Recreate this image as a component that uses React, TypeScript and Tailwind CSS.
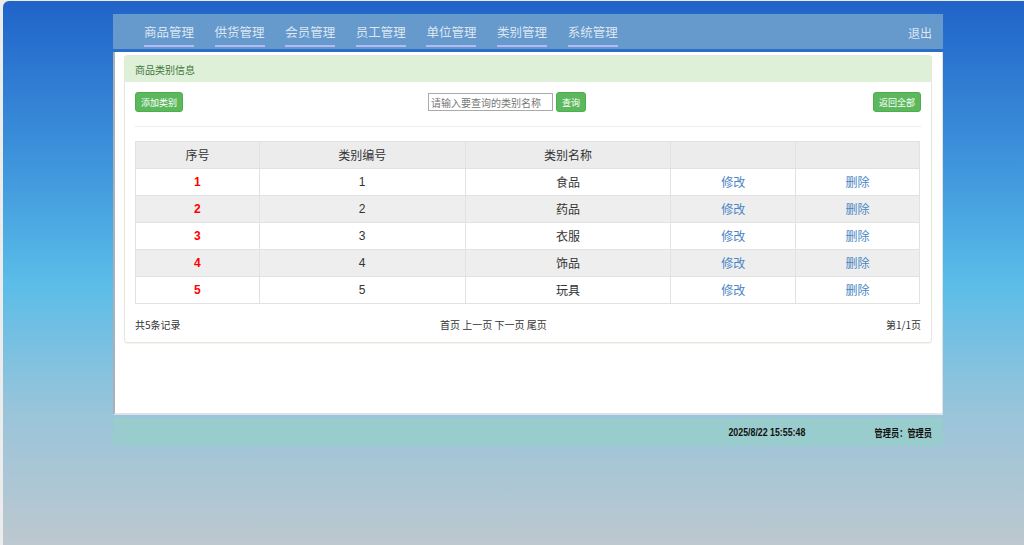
const navItems = ["商品管理", "供货管理", "会员管理", "员工管理", "单位管理", "类别管理", "系统管理"];

const rows = [
  { id: 1, name: "食品" },
  { id: 2, name: "药品" },
  { id: 3, name: "衣服" },
  { id: 4, name: "饰品" },
  { id: 5, name: "玩具" },
];

const cjk = "font-['Noto_Sans_CJK_SC','Noto_Sans',sans-serif]";

function GreenButton({ children }: { children: React.ReactNode }) {
  return (
    <button className="flex h-[20px] items-center justify-center rounded-[3px] border border-[#4cae4c] bg-[#5cb85c] px-[5px] text-[9px] leading-none text-white">
      {children}
    </button>
  );
}

export default function App() {
  return (
    <div className={`h-[545px] overflow-hidden bg-[#ececec] pl-[3px] pt-[1px] ${cjk}`}>
      <div className="h-[544px] rounded-tl-[6px] bg-[linear-gradient(180deg,#2063c9_0%,#3f95dc_30%,#5bbde8_52%,#98c4da_75%,#bdc8cf_100%)] pt-[13px]">
        <div className="ml-[110px] w-[830px]">
          {/* nav */}
          <div className="flex h-[38px] items-start border-b-[3px] border-[#2a6ec6] bg-[#6699cc] pl-[31px] pr-[11px]">
            <div className="flex gap-[20.6px] pt-[9px]">
              {navItems.map((item) => (
                <div key={item} className="flex flex-col">
                  <span className="text-[12.5px] leading-[18px] text-[#dde6f2]">{item}</span>
                  <span className="mt-[4px] h-[2px] bg-[#b6baf2]" />
                </div>
              ))}
            </div>
            <span className="ml-auto pt-[11px] text-[12px] leading-[16px] text-[#dde6f2]">退出</span>
          </div>

          {/* panel */}
          <div className="h-[363px] border-b-2 border-l-2 border-r border-b-[#dde3e8] border-l-[#a9b0b8] border-r-[#dde3e8] bg-white pl-[9px] pr-[10px] pt-[3px]">
            <div className="rounded-[3px] border border-[#e3ead9] shadow-[0_1px_1px_rgba(0,0,0,0.05)]">
              <div className="flex h-[26px] items-center bg-[#dff0d8] pl-[10px] text-[10px] text-[#3c763d]">
                商品类别信息
              </div>
              <div className="px-[10px] pb-[10px]">
                <div className="mt-[10px] flex h-[20px] items-center">
                  <GreenButton>添加类别</GreenButton>
                  <div className="ml-[245px] flex items-center gap-[3px]">
                    <input
                      placeholder="请输入要查询的类别名称"
                      className="block h-[18px] w-[125px] border border-[#aaa] px-[2px] text-[10px] leading-[16px] placeholder:text-[#777]"
                    />
                    <GreenButton>查询</GreenButton>
                  </div>
                  <div className="ml-auto flex">
                    <GreenButton>返回全部</GreenButton>
                  </div>
                </div>
                <div className="mt-[14px] border-t border-[#eeeeee]" />
                <table className="mt-[14px] w-[785px] border-collapse text-[12px] text-[#333]">
                  <colgroup>
                    <col className="w-[124px]" />
                    <col className="w-[206px]" />
                    <col className="w-[206px]" />
                    <col className="w-[125px]" />
                    <col className="w-[124px]" />
                  </colgroup>
                  <thead>
                    <tr className="h-[27px] bg-[#ececec]">
                      <th className="border border-[#e2e2e2] font-normal">序号</th>
                      <th className="border border-[#e2e2e2] font-normal">类别编号</th>
                      <th className="border border-[#e2e2e2] font-normal">类别名称</th>
                      <th className="border border-[#e2e2e2] font-normal"></th>
                      <th className="border border-[#e2e2e2] font-normal"></th>
                    </tr>
                  </thead>
                  <tbody>
                    {rows.map((r, i) => (
                      <tr key={r.id} className={`h-[27px] ${i % 2 === 1 ? "bg-[#eeeeee]" : "bg-white"}`}>
                        <td className="border border-[#e2e2e2] text-center font-['Liberation_Sans',sans-serif] font-bold text-[#ff0000]">{r.id}</td>
                        <td className="border border-[#e2e2e2] text-center font-['Liberation_Sans',sans-serif]">{r.id}</td>
                        <td className="border border-[#e2e2e2] text-center">{r.name}</td>
                        <td className="border border-[#e2e2e2] text-center text-[#4a86c4]">修改</td>
                        <td className="border border-[#e2e2e2] text-center text-[#4a86c4]">删除</td>
                      </tr>
                    ))}
                  </tbody>
                </table>
                <div className="mt-[14px] flex items-center text-[10px] leading-[14px] text-[#333]">
                  <span className="w-[305px]">共5条记录</span>
                  <span>首页 上一页 下一页 尾页</span>
                  <span className="ml-auto">第1/1页</span>
                </div>
              </div>
            </div>
          </div>

          {/* footer */}
          <div className="mt-[3px] flex h-[28px] items-center bg-[#99cccc] pr-[11px] text-[10px] font-bold text-[#111]">
            <span className="ml-auto inline-block origin-right scale-x-[0.88] whitespace-nowrap font-['Liberation_Sans',sans-serif]">
              2025/8/22 15:55:48
            </span>
            <span className="ml-[57px] inline-block origin-right scale-x-[0.82] whitespace-nowrap">管理员：管理员</span>
          </div>
        </div>
      </div>
    </div>
  );
}
